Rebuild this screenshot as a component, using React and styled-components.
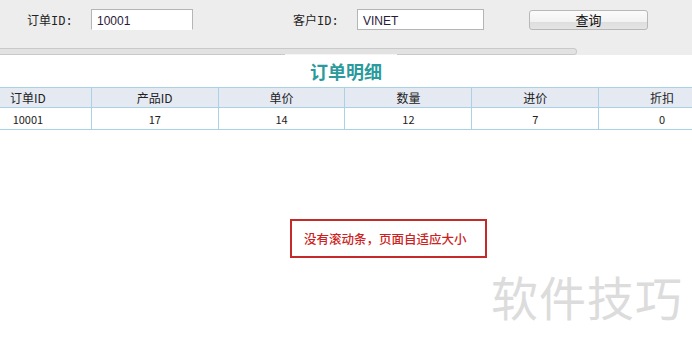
import styled, { createGlobalStyle } from "styled-components";

const GlobalStyle = createGlobalStyle`
    html, body {
        margin: 0;
        padding: 0;
        background: #fff;
        overflow: hidden;
    }
    body {
        width: 692px;
        height: 351px;
        position: relative;
        font-family: "Noto Sans CJK SC", "Liberation Sans", sans-serif;
        font-size: 12px;
        color: #222;
    }
`

const columns = ["订单ID", "产品ID", "单价", "数量", "进价", "折扣"]
const rows = [["10001", "17", "14", "12", "7", "0"]]

export default function App() {
    return (
        <>
            <GlobalStyle />
            <SPage>
                <SSearchBar>
                    <SSearchRow>
                        <SLabel $left={27}>订单ID:</SLabel>
                        <SInput $left={21} $width={102} $open defaultValue="10001" />
                        <SLabel $left={100}>客户ID:</SLabel>
                        <SInput $left={21} $width={127} defaultValue="VINET" />
                        <SButton>查询</SButton>
                    </SSearchRow>
                    <STrack>
                        <SThumb />
                    </STrack>
                </SSearchBar>

                <STitle>订单明细</STitle>

                <STableWrap>
                    <STable>
                        <thead>
                            <tr>
                                {columns.map((c) => (
                                    <STh key={c}>{c}</STh>
                                ))}
                            </tr>
                        </thead>
                        <tbody>
                            {rows.map((r, i) => (
                                <tr key={i}>
                                    {r.map((v, j) => (
                                        <STd key={j}>{v}</STd>
                                    ))}
                                </tr>
                            ))}
                        </tbody>
                    </STable>
                </STableWrap>
            </SPage>

            <SNote>
                <SNoteText>没有滚动条，页面自适应大小</SNoteText>
            </SNote>
            <SWatermark>软件技巧</SWatermark>
        </>
    )
}

const SPage = styled.div`
    display: flex;
    flex-direction: column;
    width: 692px;
`

const SSearchBar = styled.div`
    background: #ededed;
    height: 55px;
    display: flex;
    flex-direction: column;
`

const SSearchRow = styled.div`
    display: flex;
    align-items: center;
    height: 21px;
    margin-top: 9px;
`

const SLabel = styled.span`
    margin-left: ${(p) => p.$left}px;
    width: 43px;
    font-family: "Liberation Mono", "Noto Sans CJK SC", monospace;
    font-size: 12px;
    color: #222;
    white-space: nowrap;
`

const SInput = styled.input`
    box-sizing: border-box;
    margin-left: ${(p) => p.$left}px;
    width: ${(p) => p.$width}px;
    height: 21px;
    padding: 3px 5px 0;
    border: 1px solid #b5b5b5;
    border-bottom-color: ${(p) => (p.$open ? "#fff" : "#b5b5b5")};
    background: #fff;
    font-family: "Liberation Sans", sans-serif;
    font-size: 12px;
    color: #2a1a3a;
    outline: none;
`

const SButton = styled.button`
    box-sizing: border-box;
    margin-left: 45px;
    width: 119px;
    height: 20px;
    border: 1px solid #b8b8b8;
    border-radius: 3px;
    background: linear-gradient(#fbfbfb 0%, #f2f2f2 60%, #dedede 61%, #e4e4e4 100%);
    font-family: "Noto Sans CJK SC", sans-serif;
    font-size: 13px;
    color: #111;
    padding: 0;
    line-height: 18px;
`

const STrack = styled.div`
    box-sizing: border-box;
    margin-top: 18px;
    width: 577px;
    height: 7px;
    border: 1px solid #c9c9c9;
    border-left: none;
    border-radius: 0 4px 4px 0;
    background: #e2e2e2;
    position: relative;
`

const SThumb = styled.div`
    position: absolute;
    left: 285px;
    bottom: -1px;
    width: 112px;
    height: 1px;
    background: #f6f6f6;
`

const STitle = styled.h2`
    margin: 5px 0 0;
    height: 27px;
    text-align: center;
    font-family: "Noto Sans CJK SC", sans-serif;
    font-size: 18px;
    font-weight: bold;
    line-height: 22px;
    color: #2b9a9c;
`

const STableWrap = styled.div`
    display: flex;
    justify-content: center;
    width: 690px;
`

const STable = styled.table`
    flex: none;
    width: 762px;
    border-collapse: collapse;
    table-layout: fixed;
`

const STh = styled.th`
    height: 19px;
    padding: 0;
    background: #e4e9f2;
    border: 1px solid #a9d2e4;
    font-weight: normal;
    font-size: 12px;
    color: #222;
    text-align: center;
`

const STd = styled.td`
    height: 21px;
    padding: 0;
    border: 1px solid #a9d2e4;
    font-size: 11px;
    color: #222;
    text-align: center;
`

const SNote = styled.div`
    position: absolute;
    left: 290px;
    top: 219px;
    box-sizing: border-box;
    width: 197px;
    height: 39px;
    border: 2px solid #c42a2a;
    display: flex;
    align-items: center;
    padding-left: 12px;
`

const SNoteText = styled.span`
    font-family: "Noto Sans CJK SC", sans-serif;
    font-size: 12.5px;
    font-weight: 500;
    color: #cc2222;
`

const SWatermark = styled.div`
    position: absolute;
    left: 491px;
    top: 268px;
    font-family: "Noto Sans CJK SC", sans-serif;
    font-size: 47px;
    line-height: 56px;
    color: #dcdcdc;
    letter-spacing: 1px;
`
